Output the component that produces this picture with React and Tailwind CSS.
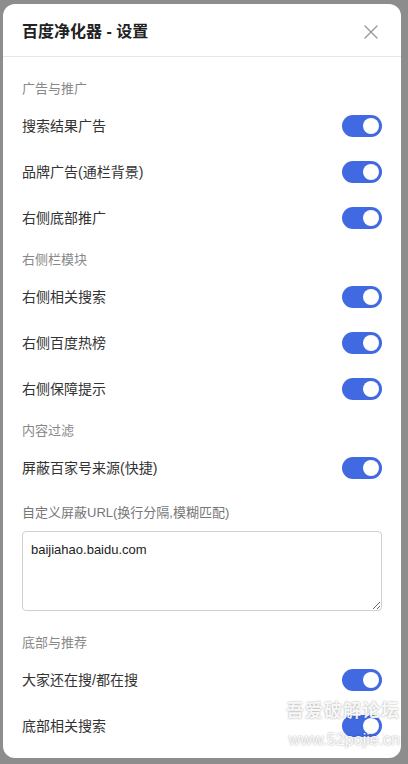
import React, { useState } from 'react';

const sections = [
  {
    title: '广告与推广',
    items: ['搜索结果广告', '品牌广告(通栏背景)', '右侧底部推广'],
  },
  {
    title: '右侧栏模块',
    items: ['右侧相关搜索', '右侧百度热榜', '右侧保障提示'],
  },
  {
    title: '内容过滤',
    items: ['屏蔽百家号来源(快捷)'],
    textarea: true,
  },
  {
    title: '底部与推荐',
    items: ['大家还在搜/都在搜', '底部相关搜索'],
  },
];

function Toggle({ on, onClick }) {
  return (
    <button
      onClick={onClick}
      className={`relative w-[40px] h-[22px] rounded-full shrink-0 transition-colors ${on ? 'bg-[#4169e1]' : 'bg-[#cccccc]'}`}
    >
      <span
        className={`absolute top-[3px] w-[16px] h-[16px] rounded-full bg-white transition-all ${on ? 'left-[21px]' : 'left-[3px]'}`}
      />
    </button>
  );
}

export default function App() {
  const [state, setState] = useState({});

  return (
    <div
      className="relative w-[408px] h-[764px] bg-[#8d8d8d] overflow-hidden"
      style={{ fontFamily: '"Liberation Sans", "Noto Sans CJK SC", sans-serif' }}
    >
      {/* Modal */}
      <div className="ml-[3px] mt-[4px] w-[398px] h-[754px] bg-white rounded-[12px] overflow-hidden flex flex-col">
        {/* Header */}
        <div className="h-[53px] shrink-0 flex items-center justify-between pl-[19px] pr-[20px] pt-[3px] border-b border-[#e6e6e6]">
          <h2 className="text-[16px] font-bold text-[#222222]">百度净化器 - 设置</h2>
          <button className="w-[20px] h-[20px] flex items-center justify-center text-[#999999]">
            <svg width="16" height="16" viewBox="0 0 16 16" fill="none" stroke="currentColor" strokeWidth="1.4" strokeLinecap="round">
              <path d="M2 2 L14 14 M14 2 L2 14" />
            </svg>
          </button>
        </div>

        {/* Content */}
        <div className="flex-1 overflow-hidden px-[19px] pt-[13px]">
          {sections.map((sec) => (
            <div key={sec.title} className="pt-[10px]">
              <div className="h-[18px] leading-[18px] text-[13px] text-[#888888] mb-[5px]">{sec.title}</div>
              {sec.items.map((label) => {
                const on = state[label] !== false;
                return (
                  <div key={label} className="h-[46px] flex items-center justify-between">
                    <span className="text-[14px] text-[#333333]">{label}</span>
                    <Toggle on={on} onClick={() => setState({ ...state, [label]: !on })} />
                  </div>
                );
              })}
              {sec.textarea && (
                <div className="pt-[13px] pb-[13px]">
                  <div className="h-[18px] leading-[18px] text-[13px] text-[#777777] mb-[9px]">自定义屏蔽URL(换行分隔,模糊匹配)</div>
                  <textarea
                    defaultValue="baijiahao.baidu.com"
                    className="block w-full h-[80px] border border-[#d0d0d0] rounded-[4px] px-[8px] py-[8px] text-[13px] text-[#222222] outline-none resize-y"
                    style={{ fontFamily: '"Liberation Sans", sans-serif' }}
                  />
                </div>
              )}
            </div>
          ))}
        </div>
      </div>

      {/* Watermark */}
      <div className="absolute right-[8px] bottom-[16px] flex flex-col items-end pointer-events-none text-white/90 leading-none" style={{ textShadow: '0 0 2px rgba(0,0,0,0.4)' }}>
        <span className="text-[18px] tracking-[1px] font-bold">吾爱破解论坛</span>
        <span className="text-[16px] mt-[12px]">www.52pojie.cn</span>
      </div>
    </div>
  );
}
